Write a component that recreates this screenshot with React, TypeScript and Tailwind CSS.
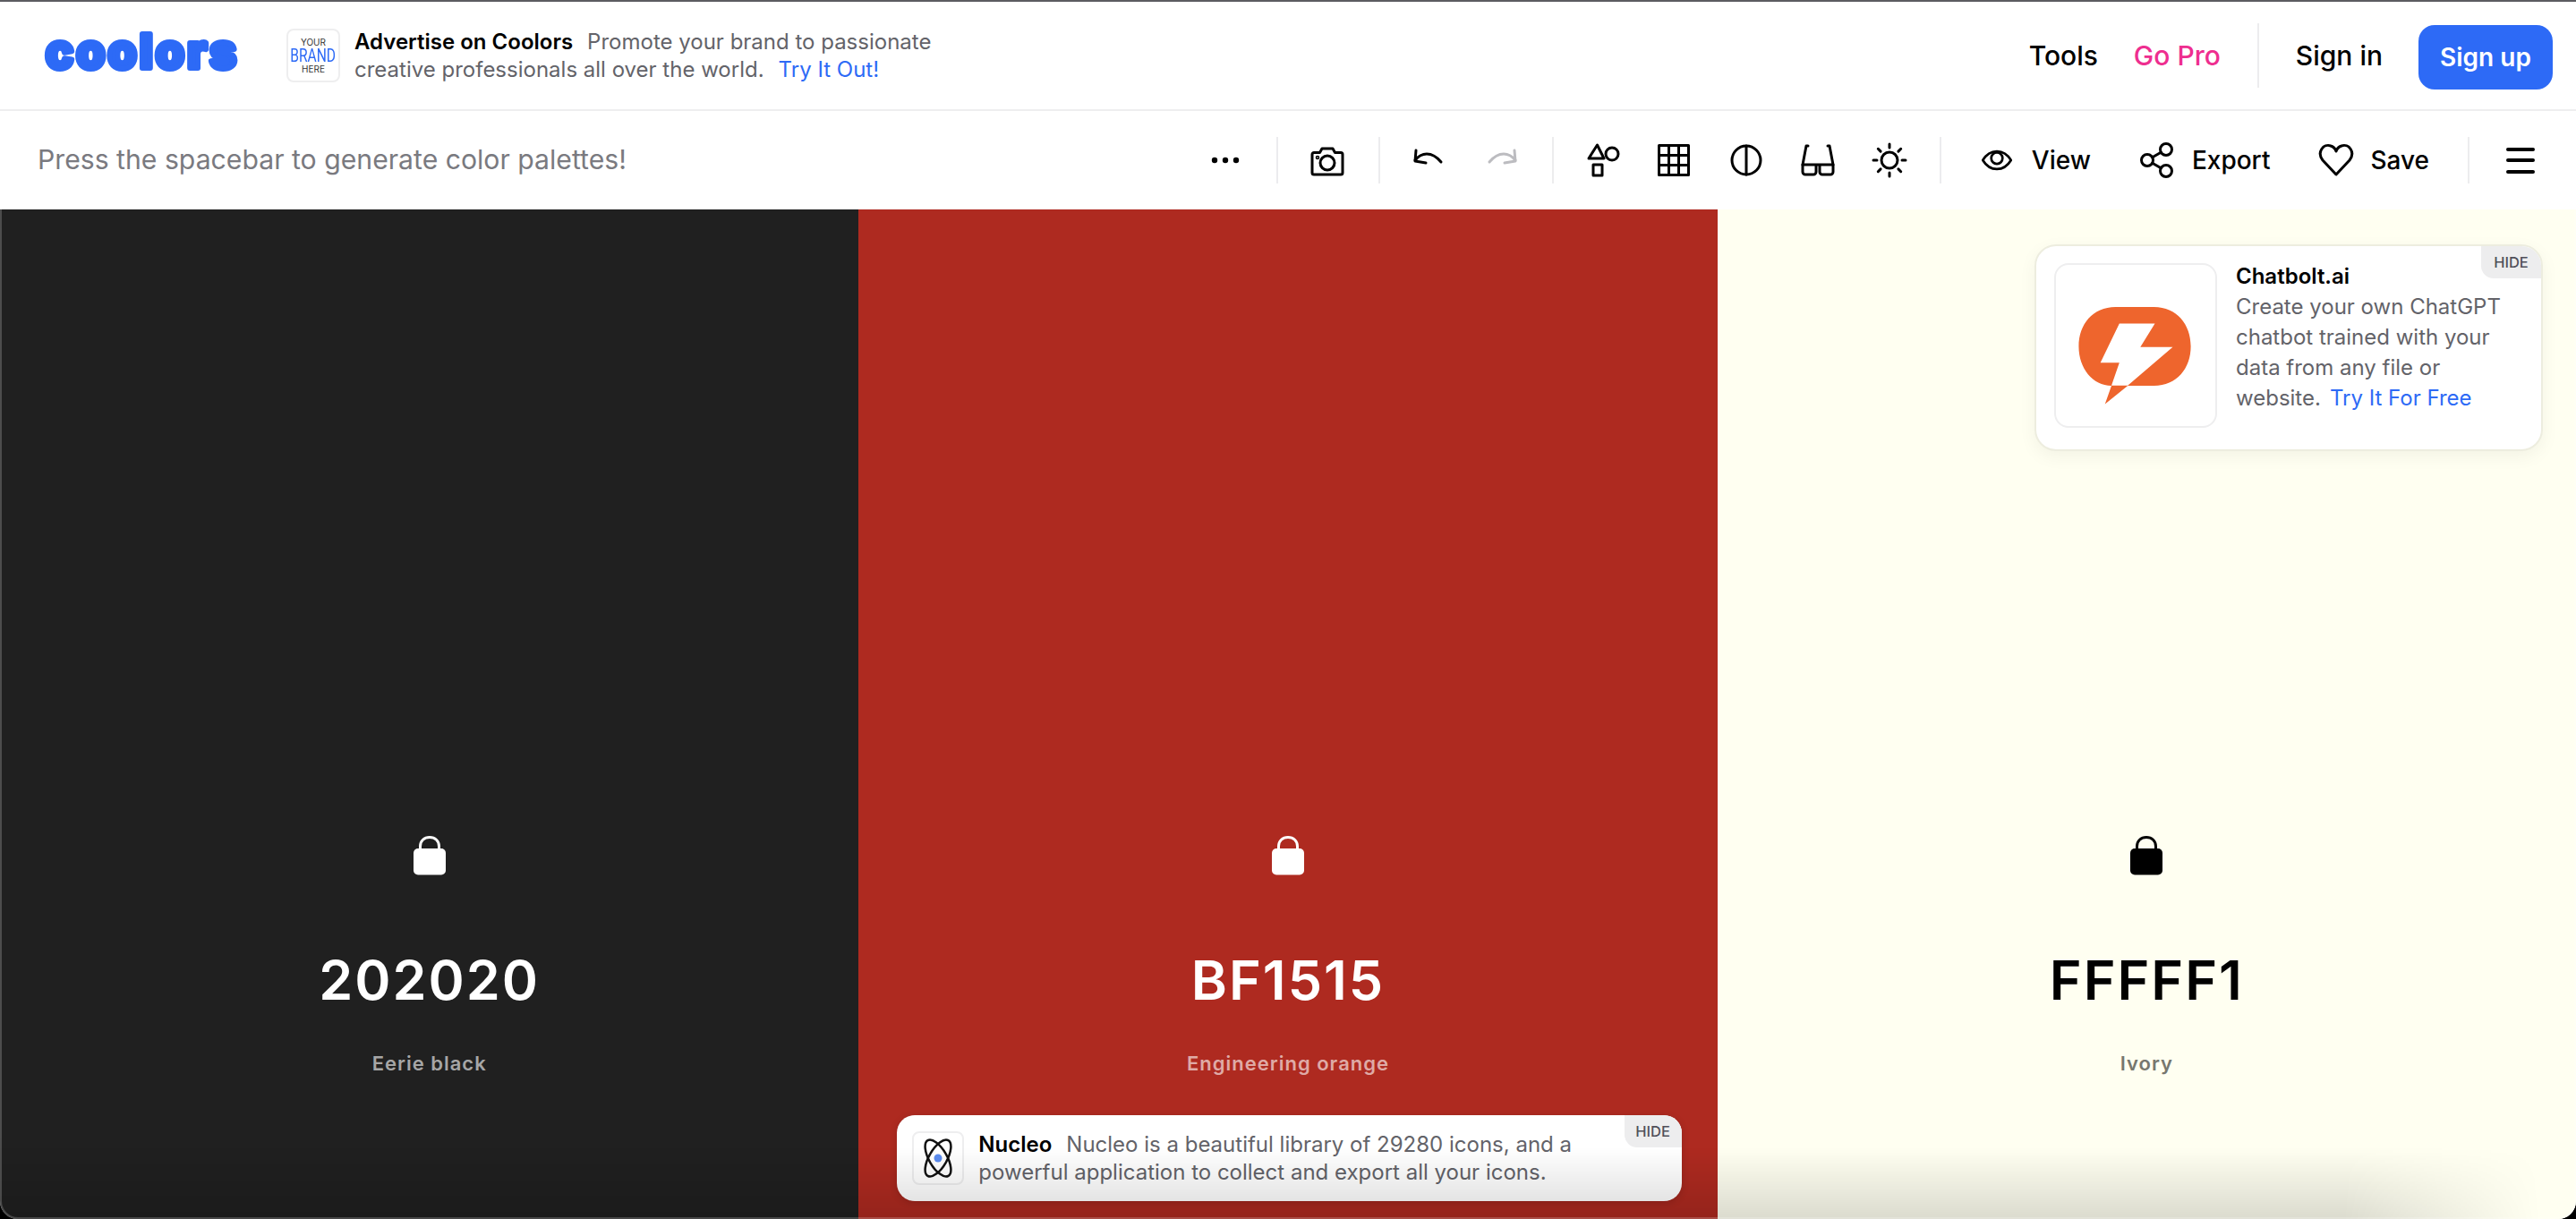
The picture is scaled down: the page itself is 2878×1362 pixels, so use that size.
import React from 'react';

const FONT = "font-['Inter',sans-serif]";

function Divider({ className = '' }: { className?: string }) {
  return <div className={`w-[2px] h-[52px] bg-[#ececee] shrink-0 ${className}`} />;
}

function IconBtn({ children, className = 'w-[80px]' }: { children: React.ReactNode; className?: string }) {
  return <button className={`h-[52px] flex items-center justify-center shrink-0 ${className}`}>{children}</button>;
}

function Svg({ size = 40, children }: { size?: number; children: React.ReactNode }) {
  return (
    <svg width={size} height={size} viewBox="0 0 40 40" fill="none" stroke="currentColor" strokeWidth="3" strokeLinecap="round" strokeLinejoin="round">
      {children}
    </svg>
  );
}

function Lock({ className }: { className: string }) {
  return (
    <svg width="36" height="44" viewBox="0 0 36 44" className={className}>
      <path d="M7.500 16V11.500C7.500 5.500 12 1.500 18 1.500s10.500 4 10.500 10V16" fill="none" stroke="currentColor" strokeWidth="3" />
      <rect x="0" y="14" width="36" height="29.500" rx="5" fill="currentColor" />
    </svg>
  );
}

function Hide({ className }: { className: string }) {
  return (
    <div className={`absolute top-0 right-0 bg-[#ededee] text-[#50505a] font-medium flex items-center justify-center ${className}`}>
      HIDE
    </div>
  );
}

function Column({ bg, hex, name, text, sub, children }: { bg: string; hex: string; name: string; text: string; sub: string; children?: React.ReactNode }) {
  return (
    <div className={`flex-1 relative flex flex-col items-center justify-end pb-[159px] ${bg}`}>
      <Lock className={`${text} mb-[81px]`} />
      <div className={`${text} text-[61px] leading-[72px] font-semibold tracking-[2px] mb-[42px]`}>{hex}</div>
      <div className={`${sub} text-[22px] leading-[30px] font-semibold tracking-[1px]`}>{name}</div>
      {children}
    </div>
  );
}

function App() {
  return (
    <div className={`h-screen bg-black overflow-hidden ${FONT}`}>
      <div className="h-full flex flex-col bg-white rounded-b-[20px] overflow-hidden border-t-2 border-[#5c5c61]">
        {/* Top nav */}
        <header className="h-[122px] shrink-0 flex items-center border-b-2 border-[#eeeeef]">
          <div className="w-[320px] pl-[48px] shrink-0">
            <svg width="224" height="60" viewBox="0 0 224 60" className="block">
              <text x="3" y="44" fontSize="52" fontWeight="800" fill="#2d6af6" stroke="#2d6af6" strokeWidth="6" strokeLinejoin="round" textLength="213" lengthAdjust="spacing">
                coolors
              </text>
            </svg>
          </div>
          <div className="w-[60px] h-[60px] border-2 border-[#eeeeef] rounded-[8px] flex flex-col items-center justify-center shrink-0 leading-none">
            <span className="text-[10px] text-[#333] leading-[12px]">YOUR</span>
            <span className="text-[20px] text-[#2d6af6] leading-[18px] font-['Roboto',sans-serif] scale-x-[0.78] whitespace-nowrap">BRAND</span>
            <span className="text-[10px] text-[#333] leading-[12px]">HERE</span>
          </div>
          <div className="ml-[16px] text-[24px] leading-[31px] text-[#636369]">
            <div><span className="font-semibold text-black mr-[16px]">Advertise on Coolors</span>Promote your brand to passionate</div>
            <div>creative professionals all over the world.<span className="text-[#2d6af6] ml-[16px]">Try It Out!</span></div>
          </div>
          <nav className="ml-auto flex items-center text-[30px] font-medium pr-[26px]">
            <span className="text-black">Tools</span>
            <span className="text-[#ee2e8f] ml-[40px]">Go Pro</span>
            <Divider className="h-[72px] ml-[41px]" />
            <span className="text-black ml-[41px]">Sign in</span>
            <button className="ml-[40px] mt-[3px] w-[150px] h-[72px] rounded-[18px] bg-[#2d6af6] text-white font-semibold text-[28px]">Sign up</button>
          </nav>
        </header>

        {/* Toolbar */}
        <div className="h-[110px] shrink-0 flex items-center pl-[42px] text-black">
          <div className="text-[#7a7a80] text-[30.200px]">Press the spacebar to generate color palettes!</div>
          <div className="ml-auto flex items-center pr-[46px]">
            <IconBtn>
              <svg width="40" height="40" viewBox="0 0 40 40" fill="currentColor"><circle cx="8" cy="20" r="3.200" /><circle cx="20" cy="20" r="3.200" /><circle cx="32" cy="20" r="3.200" /></svg>
            </IconBtn>
            <Divider className="ml-[17px]" />
            <IconBtn className="w-[80px] ml-[15px]">
              <Svg>
                <path d="M5 11.500h6.500l2.500-4.500h12l2.500 4.500H35a2 2 0 0 1 2 2V34a2 2 0 0 1-2 2H5a2 2 0 0 1-2-2V13.500a2 2 0 0 1 2-2z" />
                <circle cx="20" cy="23" r="8" />
                <circle cx="9" cy="17" r="0.800" />
              </Svg>
            </IconBtn>
            <Divider className="ml-[17px]" />
            <IconBtn className="w-[80px] ml-[14px]">
              <Svg>
                <path d="M5 20c4-5 8-7 13-7 6 0 11 3 16 9" />
                <path d="M6 9 5 21l12 2" />
              </Svg>
            </IconBtn>
            <IconBtn className="w-[80px] ml-[2px] text-[#bcbcc0]">
              <Svg>
                <path d="M35 20c-4-5-8-7-13-7-6 0-11 3-16 9" />
                <path d="M34 9l1 12-12 2" />
              </Svg>
            </IconBtn>
            <Divider className="ml-[16px]" />
            <IconBtn className="w-[78px] ml-[17px]">
              <Svg>
                <path d="M12.500 3 20 18H3z" />
                <circle cx="29" cy="13" r="7" />
                <rect x="8" y="25" width="10" height="12" />
              </Svg>
            </IconBtn>
            <IconBtn className="w-[78px]">
              <Svg>
                <rect x="3.500" y="3.500" width="33" height="33" />
                <path d="M14.500 3.500v33M25.500 3.500v33M3.500 14.500h33M3.500 25.500h33" strokeLinecap="butt" />
              </Svg>
            </IconBtn>
            <IconBtn className="w-[80px] ml-[2px]">
              <Svg>
                <circle cx="20" cy="20" r="16" />
                <path d="M20 4v32" />
              </Svg>
            </IconBtn>
            <IconBtn>
              <Svg>
                <path d="M9 4H7L3 25M31 4h2l4 21" />
                <path d="M3 25h34M3 25v8a3 3 0 0 0 3 3h9a3 3 0 0 0 3-3v-8M22 25v8a3 3 0 0 0 3 3h9a3 3 0 0 0 3-3v-8" />
              </Svg>
            </IconBtn>
            <IconBtn>
              <Svg>
                <circle cx="20" cy="20" r="9" />
                <path d="M20 2v4M20 34v4M2 20h4M34 20h4M7.300 7.300l2.800 2.800M29.900 29.900l2.800 2.800M7.300 32.700l2.800-2.800M29.900 10.100l2.800-2.800" />
              </Svg>
            </IconBtn>
            <Divider className="ml-[16px]" />
            <div className="flex items-center text-[28px] font-medium">
              <div className="ml-[44px] w-[36px] flex justify-center">
                <svg width="40" height="40" viewBox="0 0 40 40" fill="none" stroke="currentColor" strokeWidth="3" strokeLinejoin="round">
                  <path d="M2.500 20C7 12.500 13 9 20 9s13 3.500 17.500 11C33 27.500 27 31 20 31S7 27.500 2.500 20z" />
                  <circle cx="20" cy="17.500" r="7" />
                </svg>
              </div>
              <span className="ml-[21px]">View</span>
              <div className="ml-[54px] w-[40px] flex justify-center">
                <Svg>
                  <circle cx="9" cy="20" r="6.500" />
                  <circle cx="30" cy="8" r="6.500" />
                  <circle cx="30" cy="32" r="6.500" />
                  <path d="M14.700 16.800 24.300 11.200M14.700 23.200l9.600 5.600" />
                </Svg>
              </div>
              <span className="ml-[19px]">Export</span>
              <div className="ml-[54px] w-[40px] flex justify-center">
                <svg width="40" height="40" viewBox="0 0 40 40" fill="none" stroke="currentColor" strokeWidth="3" strokeLinejoin="round">
                  <path d="M20 36 5 20C-2 11 6 1 14 4c3 1 5 3 6 6 1-3 3-5 6-6 8-3 16 7 9 16z" />
                </svg>
              </div>
              <span className="ml-[18px]">Save</span>
            </div>
            <Divider className="ml-[43px]" />
            <div className="ml-[41px] w-[32px] flex flex-col gap-[8.500px]">
              <div className="h-[4px] rounded-full bg-black" />
              <div className="h-[4px] rounded-full bg-black" />
              <div className="h-[4px] rounded-full bg-black" />
            </div>
          </div>
        </div>

        {/* Palette */}
        <main className="flex-1 flex relative">
          <Column bg="bg-[#202020]" hex="202020" name="Eerie black" text="text-white" sub="text-[#a6a6a6]" />
          <Column bg="bg-[#ae2a20]" hex="BF1515" name="Engineering orange" text="text-white" sub="text-[#dfaaa6]">
            <div className="absolute left-[43px] right-[40px] bottom-[20px] h-[96px] rounded-[20px] bg-white overflow-hidden flex items-center px-[17px] shadow-[0_2px_8px_rgba(0,0,0,0.15)]">
              <div className="w-[58px] h-[60px] border-2 border-[#eeeeef] rounded-[8px] flex items-center justify-center shrink-0">
                <svg width="46" height="44" viewBox="0 0 46 44" fill="none" stroke="#111" strokeWidth="2.500">
                  <ellipse cx="23" cy="22" rx="10" ry="23" transform="rotate(30 23 22)" />
                  <ellipse cx="23" cy="22" rx="10" ry="23" transform="rotate(-30 23 22)" />
                  <circle cx="23" cy="22" r="4.500" fill="#5c8df0" stroke="none" />
                </svg>
              </div>
              <div className="ml-[16px] text-[24px] leading-[31px] text-[#636369]">
                <div><span className="font-semibold text-black mr-[16px]">Nucleo</span>Nucleo is a beautiful library of 29280 icons, and a</div>
                <div>powerful application to collect and export all your icons.</div>
              </div>
              <Hide className="w-[64px] h-[36px] rounded-bl-[14px] text-[16.500px]" />
            </div>
          </Column>
          <Column bg="bg-[#fffff1]" hex="FFFFF1" name="Ivory" text="text-black" sub="text-[#77776f]">
            <div className="absolute top-[39px] right-[37px] w-[568px] h-[231px] rounded-[24px] bg-white border-2 border-[#ededdf] overflow-hidden flex shadow-[0_6px_20px_rgba(0,0,0,0.05)] pl-[20px] pt-[19px]">
              <div className="w-[182px] h-[184px] border-2 border-[#eeeeef] rounded-[16px] shrink-0 flex items-center justify-center">
                <svg width="182" height="184" viewBox="0 0 182 184">
                  <path d="M68 48H112C138 48 154 68 154 93C154 118 138 138 112 138H82L56 159L63.400 138C42 138 26 118 26 93C26 68 42 48 68 48Z" fill="#ee652d" />
                  <path d="M72.400 67H113L96.400 93.700H133.400L82 137.700H63.400L72.400 111.700H50.800Z" fill="#fff" />
                </svg>
              </div>
              <div className="ml-[21px] -mt-[2px] text-[24px] leading-[34px] text-[#636369]">
                <div className="font-semibold text-black">Chatbolt.ai</div>
                <div>Create your own ChatGPT</div>
                <div>chatbot trained with your</div>
                <div>data from any file or</div>
                <div>website.<span className="text-[#2d6af6] ml-[10px]">Try It For Free</span></div>
              </div>
              <Hide className="w-[67px] h-[36px] rounded-bl-[14px] text-[16.500px]" />
            </div>
          </Column>
          {/* window edge fade and hairline */}
          <div className="absolute inset-x-0 bottom-0 h-[80px] pointer-events-none bg-gradient-to-b from-transparent to-[rgba(0,0,0,0.14)] [mask-image:linear-gradient(to_left,transparent_40px,black_260px)]" />
          <div className="absolute inset-0 pointer-events-none border-x-2 border-b-2 border-white/20 rounded-b-[20px]" />
        </main>
      </div>
    </div>
  );
}

export default App;
